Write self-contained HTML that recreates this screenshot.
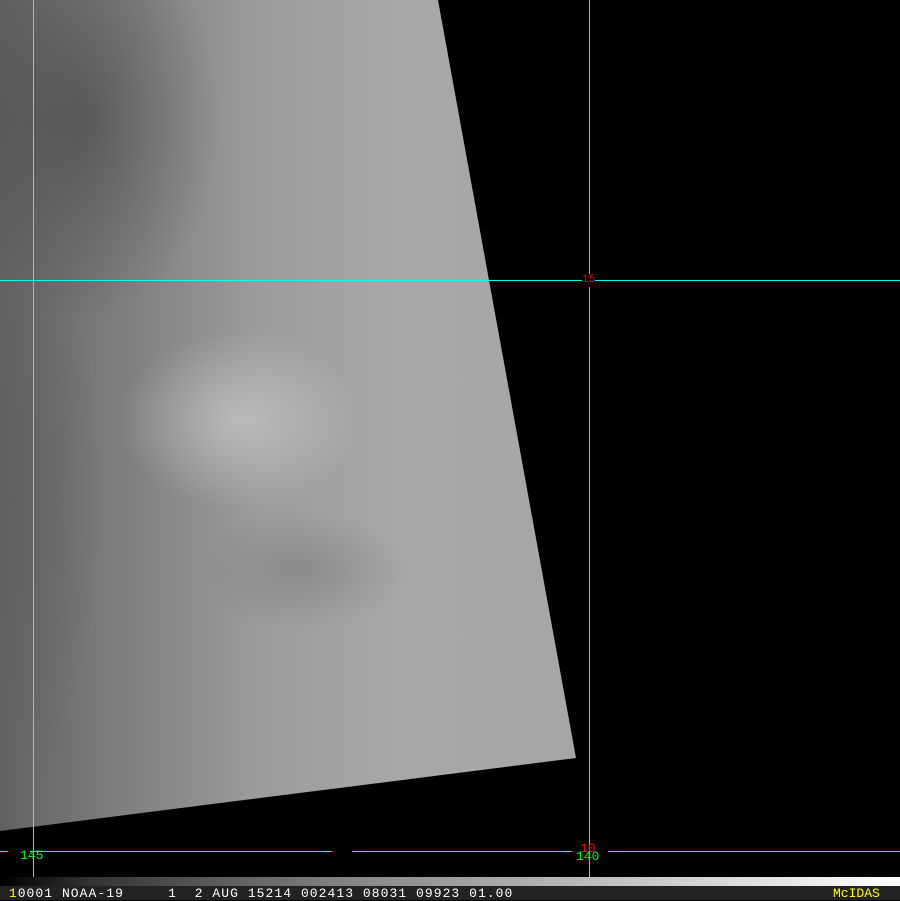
<!DOCTYPE html><html><head><style>
body{margin:0;width:900px;height:900px;background:#000;position:relative;overflow:hidden;font-family:"Liberation Mono",monospace}
#img{position:absolute;left:0;top:0;width:900px;height:900px;clip-path:polygon(0 0,438px 0,576px 758px,0 831px);
background:
radial-gradient(ellipse 120px 90px at 240px 420px,rgba(210,210,210,.6),transparent),
radial-gradient(ellipse 110px 60px at 300px 570px,rgba(100,100,100,.35),transparent),
radial-gradient(ellipse 140px 200px at 80px 120px,rgba(60,60,60,.5),transparent),
radial-gradient(ellipse 80px 300px at 20px 500px,rgba(90,90,90,.4),transparent),
linear-gradient(90deg,#626262 0,#7e7e7e 120px,#9c9c9c 260px,#a8a8a8 400px,#a6a6a6 580px)}
.v{position:absolute;top:0;width:1px;height:886px;background:#00ffff}
.h{position:absolute;height:1px;background:#00ffff}
.l{position:absolute;font-size:13px;line-height:13px}
#bar{position:absolute;left:0;top:877px;width:900px;height:9px;background:linear-gradient(90deg,#000,#333 10%,#888 40%,#bbb 65%,#fff)}
#txt{position:absolute;left:0;top:886px;width:900px;height:14px;background:#222;color:#fff;font-size:13px;line-height:15px;white-space:pre;letter-spacing:1.05px}
</style></head><body>
<div id="img"></div>
<div class="v" style="left:33px"></div>
<div class="v" style="left:589px"></div>
<div class="h" style="left:0;width:900px;top:280px"></div>
<div class="h" style="left:0;width:8px;top:851px"></div>
<div class="h" style="left:30px;width:302px;top:851px"></div>
<div class="h" style="left:352px;width:220px;top:851px"></div>
<div class="h" style="left:608px;width:292px;top:851px"></div>
<div class="l" style="left:582px;top:274px;color:#f00;background:#000;font-size:11px">15</div>
<div class="l" style="left:20px;top:849px;color:#0f0">145</div>
<div class="l" style="left:580px;top:842px;color:#f00">10</div>
<div class="l" style="left:576px;top:850px;color:#0f0">140</div>
<div id="bar"></div>
<div id="txt"><span style="color:#ff0"> 1</span>0001 NOAA-19     1  2 AUG 15214 002413 08031 09923 01.00<span style="position:absolute;left:833px;color:#ff0;letter-spacing:0">McIDAS</span></div>
</body></html>
